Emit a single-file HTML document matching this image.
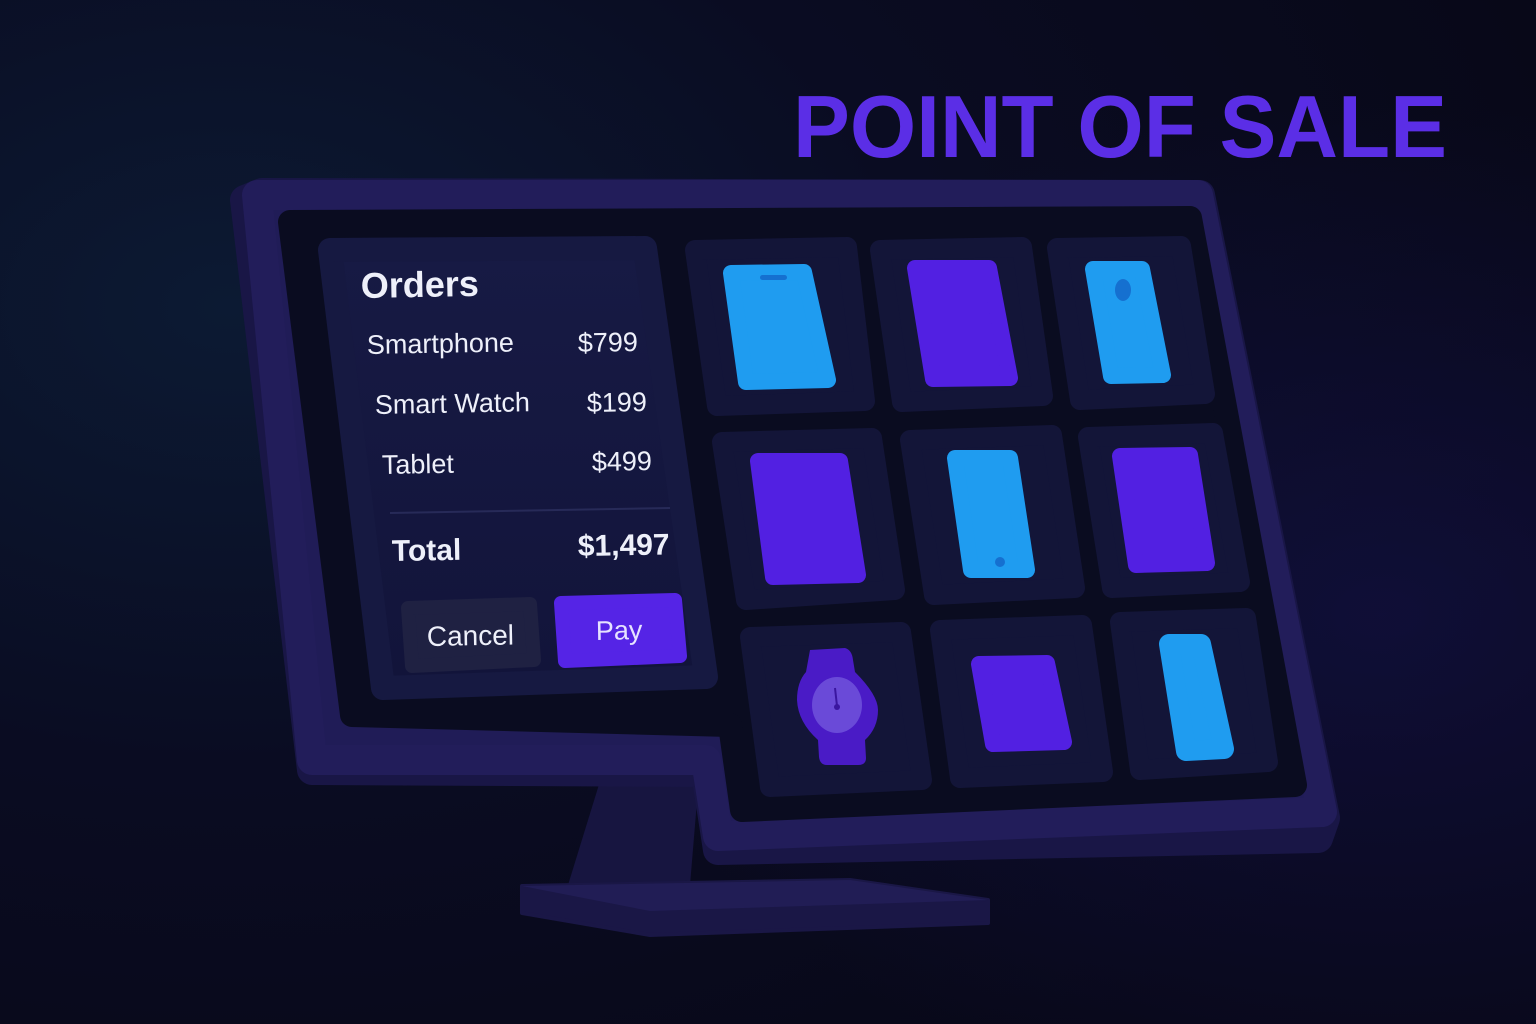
<!DOCTYPE html>
<html><head><meta charset="utf-8"><style>
html,body{margin:0;padding:0;background:#090a1f;}
svg{display:block}
text{font-family:"Liberation Sans",sans-serif;}
</style></head><body>
<svg width="1536" height="1024" viewBox="0 0 1536 1024" xmlns="http://www.w3.org/2000/svg">
<defs>
<radialGradient id="bg" cx="0.15" cy="0.3" r="0.9">
<stop offset="0" stop-color="#0c1a33"/><stop offset="0.5" stop-color="#0a0c22"/><stop offset="1" stop-color="#080818"/>
</radialGradient>
<radialGradient id="bg2" cx="0.9" cy="0.6" r="0.5">
<stop offset="0" stop-color="#14124a" stop-opacity="0.6"/><stop offset="1" stop-color="#14124a" stop-opacity="0"/>
</radialGradient>
<linearGradient id="pnl" x1="0" y1="0" x2="0" y2="1"><stop offset="0" stop-color="#171a44"/><stop offset="1" stop-color="#12143a"/></linearGradient>
</defs>
<rect width="1536" height="1024" fill="url(#bg)"/>
<rect width="1536" height="1024" fill="url(#bg2)"/>

<text x="793" y="157" font-size="88" font-weight="bold" fill="#5b2ee6" textLength="654" lengthAdjust="spacingAndGlyphs">POINT OF SALE</text>

<!-- stand -->
<polygon points="605,765 700,765 690,885 568,885" fill="#171540"/>
<polygon points="522,886 850,880 988,900 988,923 650,935 522,913" fill="#1a1746" stroke="#1a1746" stroke-width="4" stroke-linejoin="round"/>
<polygon points="522,886 850,880 988,900 650,911" fill="#211d55"/>

<!-- bezel -->
<polygon points="245,200 262,193 1200,195 1325,818 1318,838 718,850 706,772 312,770" fill="#191646" stroke="#191646" stroke-width="30" stroke-linejoin="round"/>
<polygon points="257,195 1198,195 1322,812 718,836 706,760 312,760" fill="#201c57" stroke="#221d5a" stroke-width="30" stroke-linejoin="round"/>
<!-- screen -->
<polygon points="290,222 1190,218 1295,785 742,810 730,725 352,715" fill="#0a0c20" stroke="#0a0c20" stroke-width="24" stroke-linejoin="round"/>

<!-- orders panel -->
<polygon points="330,250 645,248 706,677 383,688" fill="url(#pnl)" stroke="#161941" stroke-width="24" stroke-linejoin="round"/>
<g fill="#eef0fa">
<text x="361" y="298" font-size="36" font-weight="bold" transform="rotate(-1 361 298)">Orders</text>
<text x="367" y="354" font-size="27" transform="rotate(-1 367 354)">Smartphone</text>
<text x="578" y="352" font-size="27" transform="rotate(-1 578 352)">$799</text>
<text x="375" y="414" font-size="27" transform="rotate(-1 375 414)">Smart Watch</text>
<text x="587" y="412" font-size="27" transform="rotate(-1 587 412)">$199</text>
<text x="382" y="474" font-size="27" transform="rotate(-1 382 474)">Tablet</text>
<text x="592" y="471" font-size="27" transform="rotate(-1 592 471)">$499</text>
<text x="392" y="561" font-size="30" font-weight="bold" transform="rotate(-1 392 561)">Total</text>
<text x="578" y="556" font-size="30" font-weight="bold" transform="rotate(-1 578 556)">$1,497</text>
</g>
<line x1="390" y1="513" x2="670" y2="508" stroke="#272a58" stroke-width="2"/>
<polygon points="408,608 530,604 534,660 412,666" fill="#1f2142" stroke="#1f2142" stroke-width="14" stroke-linejoin="round"/>
<text x="427" y="646" font-size="28" fill="#eef0fa" transform="rotate(-1 427 646)">Cancel</text>
<polygon points="561,603 675,600 680,656 565,661" fill="#5524e6" stroke="#5524e6" stroke-width="14" stroke-linejoin="round"/>
<text x="596" y="640" font-size="27" fill="#e6e2ff" transform="rotate(-1 596 640)">Pay</text>

<!-- tiles -->
<g fill="#131538" stroke="#131538" stroke-width="20" stroke-linejoin="round">
<polygon points="695,250 847,247 865,401 717,406"/>
<polygon points="880,250 1022,247 1043,396 902,402"/>
<polygon points="1057,248 1181,246 1205,394 1080,400"/>
<polygon points="722,442 872,438 895,590 746,600"/>
<polygon points="910,440 1052,435 1075,588 934,595"/>
<polygon points="1088,437 1213,433 1240,582 1112,588"/>
<polygon points="750,637 901,632 922,780 770,787"/>
<polygon points="940,630 1082,625 1103,772 960,778"/>
<polygon points="1120,622 1246,618 1268,762 1140,770"/>
</g>

<!-- devices -->
<g stroke-linejoin="round" stroke-width="16">
<g fill="#1f9cf0" stroke="#1f9cf0">
<polygon points="731,273 804,272 828,380 746,382"/>
<polygon points="1093,269 1142,269 1163,375 1111,376"/>
<polygon points="955,458 1010,458 1027,570 971,570"/>
<polygon points="1169,644 1201,644 1224,749 1186,751" stroke-width="20"/>
</g>
<g fill="#5220e2" stroke="#5220e2">
<polygon points="915,268 989,268 1010,378 933,379"/>
<polygon points="758,461 840,461 858,575 773,577"/>
<polygon points="1120,456 1190,455 1207,563 1136,565"/>
<polygon points="979,664 1047,663 1064,742 993,744"/>
</g>
</g>
<rect x="760" y="275" width="27" height="5" rx="2.5" fill="#1570d0"/>
<ellipse cx="1123" cy="290" rx="8" ry="11" fill="#1570d0"/>
<circle cx="1000" cy="562" r="5" fill="#1570d0"/>
<!-- watch -->
<path d="M810,650 L845,648 Q852,650 853,660 L855,672 Q878,695 878,710 Q878,728 865,740 L866,758 Q866,765 858,765 L827,765 Q820,765 819,757 L818,740 Q798,722 797,700 Q797,682 806,672 Z" fill="#4a1bc6"/>
<ellipse cx="837" cy="705" rx="25" ry="28" fill="#6a4ad8"/>
<line x1="835" y1="688" x2="837" y2="706" stroke="#3a16a0" stroke-width="2"/>
<circle cx="837" cy="707" r="3" fill="#3a16a0"/>
</svg>
</body></html>
